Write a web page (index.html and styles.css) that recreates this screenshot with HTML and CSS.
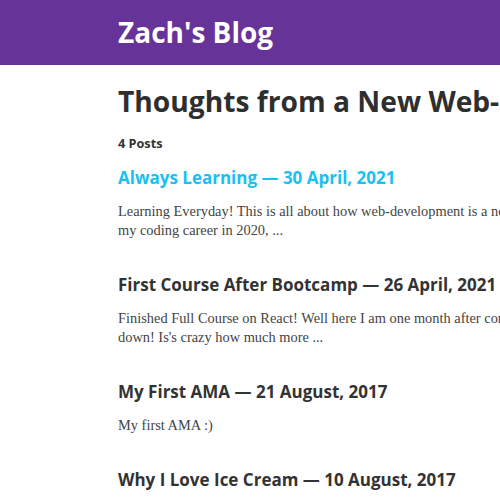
FILE: index.html
```html
<!DOCTYPE html>
<html>
<head>
<meta charset="utf-8">
<link rel="stylesheet" href="styles.css">
</head>
<body>
<header class="site-header">
  <div class="container">
    <h1 class="site-title">Zach's Blog</h1>
  </div>
</header>
<main class="container main">
  <h1 class="page-title">Thoughts from a New Web-Developer</h1>
  <h4 class="count">4 Posts</h4>
  <article class="post">
    <h3 class="post-title active">Always Learning — 30 April, 2021</h3>
    <p class="excerpt">Learning Everyday! This is all about how web-development is a never ending journey of learning and growing since I started my coding career in 2020, ...</p>
  </article>
  <article class="post">
    <h3 class="post-title">First Course After Bootcamp — 26 April, 2021</h3>
    <p class="excerpt">Finished Full Course on React! Well here I am one month after completing my coding bootcamp, and I now have one course down! Is's crazy how much more ...</p>
  </article>
  <article class="post">
    <h3 class="post-title">My First AMA — 21 August, 2017</h3>
    <p class="excerpt">My first AMA :)</p>
  </article>
  <article class="post">
    <h3 class="post-title">Why I Love Ice Cream — 10 August, 2017</h3>
    <p class="excerpt">Why I love ice cream.</p>
  </article>
</main>
</body>
</html>
```
FILE: styles.css
```css
html { overflow: hidden; }
body {
  margin: 0;
  font-family: "Liberation Serif", serif;
  color: #444;
  background: #fff;
}
.container {
  margin-left: 118px;
  width: 732px;
}
.site-header {
  background: #663399;
  padding: 15px 0 16px;
}
.site-title {
  margin: 0;
  color: #fff;
  font-family: "Open Sans", sans-serif;
  font-weight: 700;
  font-size: 28px;
  line-height: 34px;
}
.main { padding-top: 19px; }
.page-title {
  margin: 0 0 17px;
  font-family: "Open Sans", sans-serif;
  font-weight: 700;
  font-size: 28.2px;
  line-height: 34px;
  color: #2e2e2e;
  white-space: nowrap;
}
.count {
  margin: 0 0 14px;
  font-family: "Open Sans", sans-serif;
  font-weight: 700;
  font-size: 12.7px;
  line-height: 17px;
  color: #333;
}
.post { margin-bottom: 33px; }
.post-title {
  margin: 0 0 13px;
  font-family: "Open Sans", sans-serif;
  font-weight: 700;
  font-size: 17px;
  line-height: 23px;
  color: #333;
  white-space: nowrap;
}
.post-title.active { color: #1ac0f2; }
.excerpt {
  margin: 0;
  font-size: 14.4px;
  line-height: 19px;
}
```
